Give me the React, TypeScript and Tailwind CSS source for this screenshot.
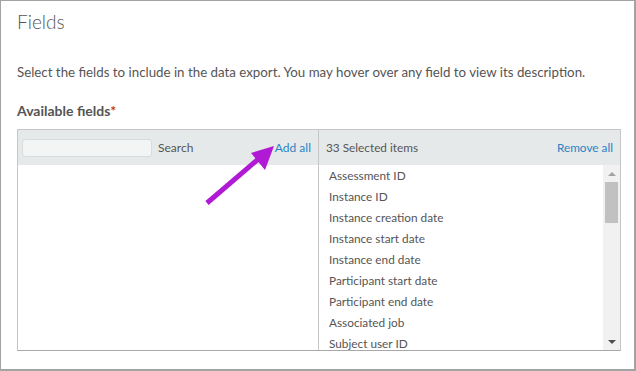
const selected = [
  "Assessment ID",
  "Instance ID",
  "Instance creation date",
  "Instance start date",
  "Instance end date",
  "Participant start date",
  "Participant end date",
  "Associated job",
  "Subject user ID",
];

function Scrollbar() {
  return (
    <div className="flex h-full w-[17px] shrink-0 flex-col bg-[#f1f1f1]">
      <div className="flex h-[17px] items-center justify-center">
        <div className="h-0 w-0 border-x-[4px] border-b-[4px] border-x-transparent border-b-[#a3a3a3]" />
      </div>
      <div className="mx-[2px] h-[41px] bg-[#c1c1c1]" />
      <div className="flex-1" />
      <div className="flex h-[17px] items-center justify-center">
        <div className="h-0 w-0 border-x-[4px] border-t-[4px] border-x-transparent border-t-[#505050]" />
      </div>
    </div>
  );
}

export default function App() {
  return (
    <div
      className="relative h-[371px] w-[636px] overflow-hidden border border-r-2 border-b-2 border-[#a3a3a3] bg-white text-[#555]"
      style={{ fontFamily: "Lato, 'Liberation Sans', sans-serif" }}
    >
      <div className="px-4 pt-[9px]">
        <h1 className="text-[19px] leading-6 font-light text-[#555]">Fields</h1>
        <p className="mt-[28px] text-[13.3px] leading-5">
          Select the fields to include in the data export. You may hover over any field to view its description.
        </p>
        <div className="mt-[19px] text-[14px] leading-5 font-bold">
          Available fields<span className="text-[#c0392b]">*</span>
        </div>

        <div className="mt-[8px] flex h-[222px] w-[604px] border border-[#c6c6c6] border-b-[#a8a8a8]">
          <div className="flex w-[301px] flex-col border-r border-[#c6c6c6]">
            <div className="flex h-[35px] items-center bg-[#e6e9ea] pr-[7px] pl-[4px] text-[12px]">
              <input
                className="h-[18px] w-[130px] rounded-[3px] border border-[#d8dcdc] bg-[#f3f4f4]"
                aria-label="Search"
              />
              <span className="ml-[6px] text-[#555]">Search</span>
              <span className="ml-auto text-[#2a84c4]">Add all</span>
            </div>
            <div className="flex-1" />
          </div>
          <div className="flex flex-1 flex-col">
            <div className="flex h-[35px] items-center bg-[#e6e9ea] pr-[7px] pl-[7px] text-[11.8px]">
              <span>33 Selected items</span>
              <span className="ml-auto text-[#2a84c4]">Remove all</span>
            </div>
            <div className="flex min-h-0 flex-1">
              <ul className="flex-1 overflow-hidden pl-[10px] text-[11.8px]">
                {selected.map((s) => (
                  <li key={s} className="h-[21px] leading-[21px]">
                    {s}
                  </li>
                ))}
              </ul>
              <Scrollbar />
            </div>
          </div>
        </div>
      </div>

      <svg className="absolute top-[138px] left-[200px]" width="80" height="70" viewBox="0 0 80 70">
        <line x1="6" y1="64" x2="62" y2="16" stroke="#b01ad4" strokeWidth="5" />
        <polygon points="73,7 50,14 64,31" fill="#b01ad4" />
      </svg>
    </div>
  );
}
